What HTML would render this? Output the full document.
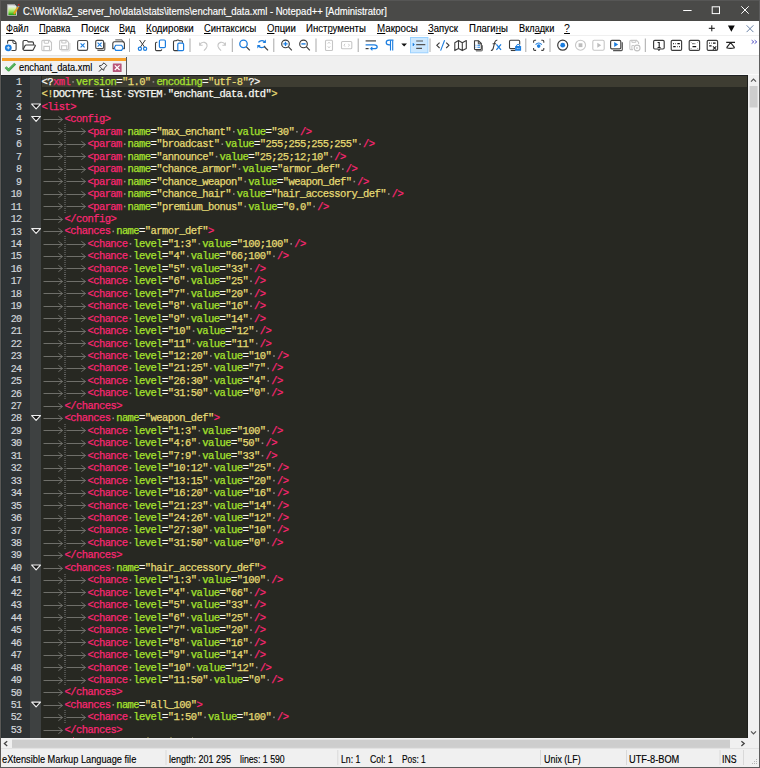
<!DOCTYPE html>
<html><head><meta charset="utf-8">
<style>
*{margin:0;padding:0;box-sizing:border-box}
html,body{width:760px;height:768px;overflow:hidden;background:#f0f0f0;font-family:"Liberation Sans",sans-serif}
.a{position:absolute}
.lbl{position:absolute;white-space:pre;transform-origin:0 0;-webkit-text-stroke:0.15px currentColor;font-size:10.5px;line-height:12px;color:#000}
u{text-decoration:underline;text-decoration-thickness:1px;text-underline-offset:0.5px;-webkit-text-stroke:0}
#title{left:0;top:0;width:760px;height:21px;background:#4a4a48}
#menu{left:1px;top:21px;width:758px;height:14px;background:#fff}
#tool{left:1px;top:35px;width:758px;height:20px;background:#fff;border-top:1px solid #f0f0f0}
#tabbar{left:1px;top:55px;width:758px;height:20px;background:#f0f0f0}
#editor{left:1px;top:75px;width:747px;height:663px;background:#272822;overflow:hidden}
#nummar{left:0;top:0;width:29px;height:663px;background:#2f3335;border-left:1px solid #293032}
#foldmar{left:29px;top:0;width:11px;height:663px;background:#3e4141}
.num{position:absolute;left:0;width:20.3px;text-align:right;font:10px "Liberation Mono",monospace;letter-spacing:-0.75px;-webkit-text-stroke:0.2px currentColor;line-height:12.46px;height:12.46px;color:#d2d6da}
.ln{position:absolute;left:40.5px;-webkit-text-stroke:0.25px currentColor;white-space:pre;font:10.5px "Liberation Mono",monospace;letter-spacing:-0.56px;line-height:12.46px;height:12.46px;color:#f8f8f2}
.ln .p{color:#f92672}.ln .g{color:#a6e22e}.ln .y{color:#e6db74}.ln .w{color:#f8f8f2}
.ln i{font-style:normal;color:#7a7a74}
.ln .t{display:inline-block;width:22.96px}
#curline{left:40.5px;top:0;width:707px;height:12.46px;background:#3e3d32}
#vscroll{left:748px;top:75px;width:11px;height:663px;background:#f0f0f0}
#hscroll{left:1px;top:738px;width:747px;height:10px;background:#f0f0f0}
#status{left:1px;top:748px;width:758px;height:19px;background:#f0f0f0;border-top:1px solid #e2e2e2}
#bl{left:0;top:0;width:1px;height:768px;background:#5a5856}
#br{left:759px;top:0;width:1px;height:768px;background:#5c5c5c}
#bb{left:0;top:767px;width:760px;height:1px;background:#5a5a5a}
</style></head><body>
<div id="title" class="a"></div>
<svg class="a" style="left:0;top:0" width="760" height="21"><defs><linearGradient id="gg" x1="0" y1="0" x2="0" y2="1"><stop offset="0" stop-color="#e8f0f8"/><stop offset="0.3" stop-color="#d8f0a0"/><stop offset="0.65" stop-color="#8ee04a"/><stop offset="1" stop-color="#1a9a10"/></linearGradient></defs><rect x="7.6" y="14.8" width="9.6" height="1.6" fill="#333" opacity="0.6"/><path d="M7.3 4.2H14.4L16.9 6.7V15.8H7.3Z" fill="#d9d9d9"/><path d="M7.3 4.2H14.4L15.2 5H7.3Z" fill="#9a9a9a"/><path d="M14.3 4.2V6.8H16.9Z" fill="#f0f0f0" stroke="#888" stroke-width="0.4"/><rect x="8.4" y="6.1" width="7.6" height="9" fill="url(#gg)"/><path d="M13.2 13.6L17.5 6.4L18.9 7.2L14.6 14.4Z" fill="#f0a818" stroke="#b87010" stroke-width="0.3"/><path d="M17.5 6.4L18.1 5.4L19.5 6.2L18.9 7.2Z" fill="#8aa0c0"/><circle cx="18.8" cy="4.8" r="0.9" fill="#d01818"/><path d="M683.2 10.5H691.6" stroke="#fff" stroke-width="1"/><rect x="712.2" y="6.8" width="7.3" height="6.8" fill="none" stroke="#fff" stroke-width="1"/><path d="M741.3 6.3L748.7 13.7M748.7 6.3L741.3 13.7" stroke="#fff" stroke-width="1"/></svg><div class="lbl" style="left:22.60px;top:4.56px;transform:scaleX(0.9065);color:#ffffff;font-size:10.5px">C:\Work\la2_server_ho\data\stats\items\enchant_data.xml - Notepad++ [Administrator]</div>
<div id="menu" class="a"></div>
<div class="lbl" style="left:6.00px;top:22.36px;transform:scaleX(0.8745);color:#000;font-size:10.5px"><u>Ф</u>айл</div>
<div class="lbl" style="left:39.40px;top:22.36px;transform:scaleX(0.8823);color:#000;font-size:10.5px"><u>П</u>равка</div>
<div class="lbl" style="left:81.40px;top:22.36px;transform:scaleX(0.9571);color:#000;font-size:10.5px">По<u>и</u>ск</div>
<div class="lbl" style="left:119.40px;top:22.36px;transform:scaleX(0.8564);color:#000;font-size:10.5px"><u>В</u>ид</div>
<div class="lbl" style="left:146.00px;top:22.36px;transform:scaleX(0.9260);color:#000;font-size:10.5px"><u>К</u>одировки</div>
<div class="lbl" style="left:203.90px;top:22.36px;transform:scaleX(0.8921);color:#000;font-size:10.5px"><u>С</u>интаксисы</div>
<div class="lbl" style="left:267.40px;top:22.36px;transform:scaleX(0.9118);color:#000;font-size:10.5px"><u>О</u>пции</div>
<div class="lbl" style="left:306.40px;top:22.36px;transform:scaleX(0.9135);color:#000;font-size:10.5px">Инст<u>р</u>ументы</div>
<div class="lbl" style="left:377.30px;top:22.36px;transform:scaleX(0.9328);color:#000;font-size:10.5px"><u>М</u>акросы</div>
<div class="lbl" style="left:428.40px;top:22.36px;transform:scaleX(0.9078);color:#000;font-size:10.5px"><u>З</u>апуск</div>
<div class="lbl" style="left:469.40px;top:22.36px;transform:scaleX(0.9121);color:#000;font-size:10.5px">Плаги<u>н</u>ы</div>
<div class="lbl" style="left:518.90px;top:22.36px;transform:scaleX(0.8761);color:#000;font-size:10.5px">Вкл<u>а</u>дки</div>
<div class="lbl" style="left:564.10px;top:22.36px;transform:scaleX(1.0000);color:#000;font-size:10.5px"><u>?</u></div><svg class="a" style="left:0;top:0" width="760" height="36"><path d="M708.8 28.3H714.8M711.8 25.3V31.3" stroke="#111" stroke-width="1"/><path d="M727.9 25.6H734.8L731.35 31.8Z" fill="#0a0a0a"/><path d="M746.6 25.3L753.4 32.1M753.4 25.3L746.6 32.1" stroke="#6a82a6" stroke-width="1"/></svg>
<div id="tool" class="a"></div>
<svg class="a" style="left:0;top:0" width="760" height="60"><path d="M8.9 40.4H13.2Q13.8 40.4 14.3 40.9L15.6 42.2Q16.1 42.7 16.1 43.3V49.3Q16.1 50.5 14.9 50.5H8.9Q7.6 50.5 7.6 49.3V41.7Q7.6 40.4 8.9 40.4Z" fill="#fff" stroke="#3c3c3c" stroke-width="1.1"/><path d="M12.9 40.5V42.3Q12.9 43.5 14.1 43.5H16" fill="none" stroke="#3c3c3c" stroke-width="1"/><circle cx="8.3" cy="47.8" r="4.3" fill="#fff"/><circle cx="8.3" cy="47.8" r="3.4" fill="#1b7ddf"/><path d="M8.3 46.2V49.4M6.7 47.8H9.9" stroke="#d8e8f8" stroke-width="1"/><path d="M23 49.4V41.7Q23 40.5 24.2 40.5H26.6Q27.2 40.5 27.6 41L28.2 41.8H32.3Q33.5 41.8 33.5 43V44.8" fill="none" stroke="#3c3c3c" stroke-width="1.15" stroke-linejoin="round"/><path d="M23.4 50.3H32.2Q33 50.3 33.4 49.6L35.2 46Q35.6 45 34.6 45H26.2Q25.4 45 25 45.8L23 49.8" fill="none" stroke="#3c3c3c" stroke-width="1.15" stroke-linejoin="round"/><path d="M41.8 41.5Q41.8 40.4 42.9 40.4H49.3L51.5 42.6V49.6Q51.5 50.6 50.5 50.6H42.9Q41.8 50.6 41.8 49.6Z" fill="none" stroke="#c6c6c6" stroke-width="1.1"/><path d="M44.2 40.6V42.6Q44.2 43.2 44.8 43.2H48.1Q48.6 43.2 48.6 42.6V40.6M43.9 50.5V46.4H49.5V50.5" fill="none" stroke="#c6c6c6" stroke-width="1.1"/><path d="M59.6 41.5Q59.6 40.4 60.7 40.4H66.6L68.6 42.4V48.6Q68.6 49.6 67.6 49.6H60.7Q59.6 49.6 59.6 48.6Z" fill="none" stroke="#c6c6c6" stroke-width="1.1"/><path d="M61.8 40.6V42.4Q61.8 43 62.4 43H65.5Q66 43 66 42.4V40.6M61.6 49.5V45.8H66.8V49.5" fill="none" stroke="#c6c6c6" stroke-width="1.1"/><path d="M69.9 43V49.8Q69.9 50.9 68.8 50.9H61.3" fill="none" stroke="#d4d4d4" stroke-width="1"/><rect x="77.6" y="40.5" width="10" height="9.8" rx="1.6" fill="#fff" stroke="#4a4a4a" stroke-width="1.15"/><path d="M80.6 43.4L84.6 47.4M84.6 43.4L80.6 47.4" stroke="#1b7ddf" stroke-width="1.1"/><path d="M104.8 42.4V49.3Q104.8 50.4 103.7 50.4H97.4" fill="none" stroke="#5a5a5a" stroke-width="1.2"/><rect x="95.7" y="40.4" width="7.9" height="8.2" rx="1.4" fill="#fff" stroke="#4a4a4a" stroke-width="1.15"/><path d="M97.6 42.6L101.6 46.6M101.6 42.6L97.6 46.6" stroke="#1b7ddf" stroke-width="1.1"/><path d="M115.3 39.8H121.6L123.8 42.4" fill="none" stroke="#777" stroke-width="1.3"/><path d="M114 48.6H112.8V43.4Q112.8 41.8 114.6 41.8H122.6Q124.4 41.8 124.4 43.4V48.6H123.2" fill="none" stroke="#3c3c3c" stroke-width="1.1" stroke-linejoin="round"/><path d="M115.7 45.3H121.6L123.1 47.9L121.6 50.4H115.7L114.2 47.9Z" fill="#fff" stroke="#1b7ddf" stroke-width="1.1" stroke-linejoin="round"/><rect x="129.0" y="38.5" width="1" height="13.5" fill="#a9a9a9"/><path d="M139.6 40L144.6 47.2M145.3 40L140.3 47.2" stroke="#3c3c3c" stroke-width="1"/><circle cx="139.9" cy="48.7" r="1.6" fill="none" stroke="#1b7ddf" stroke-width="1.2"/><circle cx="145.1" cy="48.7" r="1.6" fill="none" stroke="#1b7ddf" stroke-width="1.2"/><path d="M157.3 42.3H156.6Q155.5 42.3 155.5 43.4V49.5Q155.5 50.6 156.6 50.6H160.5Q161.6 50.6 161.8 49.3" fill="none" stroke="#3c3c3c" stroke-width="1.1"/><rect x="159.4" y="40" width="6" height="7.7" rx="1.2" fill="#fff" stroke="#1b7ddf" stroke-width="1.2"/><path d="M178.5 50.6H174.6Q173.5 50.6 173.5 49.5V41.8Q173.5 40.8 174.6 40.8H176Q177.8 39.3 179.6 40.8H181.4Q182.5 40.8 182.5 42V42.8" fill="none" stroke="#3c3c3c" stroke-width="1.1"/><rect x="177.8" y="43.2" width="5.8" height="7.5" rx="1.2" fill="#fff" stroke="#1b7ddf" stroke-width="1.2"/><rect x="189.5" y="38.5" width="1" height="13.5" fill="#a9a9a9"/><path d="M199.6 42.4V45.3H202.6M199.8 45Q201.3 41.7 204.4 42.4Q207.4 43.2 207 46.4Q206.6 48.3 203.9 50.6" fill="none" stroke="#c6c6c6" stroke-width="1.1"/><path d="M225.4 42.4V45.3H222.4M225.2 45Q223.7 41.7 220.6 42.4Q217.6 43.2 218 46.4Q218.4 48.3 221.1 50.6" fill="none" stroke="#c6c6c6" stroke-width="1.1"/><rect x="231.8" y="38.5" width="1" height="13.5" fill="#a9a9a9"/><circle cx="243.5" cy="43.9" r="3.7" fill="none" stroke="#1b7ddf" stroke-width="1.3"/><path d="M246.4 46.8L249.8 50.4" stroke="#3c3c3c" stroke-width="1.2"/><path d="M258.4 42.4Q260 40.4 262.2 40.6Q264 40.8 265 42.2" fill="none" stroke="#1b7ddf" stroke-width="1.3"/><path d="M265.9 39.6V43H262.6Z" fill="#1b7ddf"/><path d="M265 45.8Q263.8 47.6 261.6 47.6Q259.6 47.4 258.6 45.9" fill="none" stroke="#1b7ddf" stroke-width="1.3"/><path d="M257.3 48.4V45.1H260.6Z" fill="#1b7ddf"/><path d="M264.2 46.5L268 50.4" stroke="#3c3c3c" stroke-width="1.2"/><rect x="273.3" y="38.5" width="1" height="13.5" fill="#a9a9a9"/><circle cx="285.5" cy="43.9" r="3.8" fill="#fff" stroke="#3c3c3c" stroke-width="1.15"/><path d="M285.5 41.8V46M283.4 43.9H287.6" stroke="#1b7ddf" stroke-width="1.3"/><path d="M288.3 46.7L291.8 50.4" stroke="#3c3c3c" stroke-width="1.2"/><circle cx="303.5" cy="43.9" r="3.8" fill="#fff" stroke="#3c3c3c" stroke-width="1.15"/><path d="M301.4 43.9H305.6" stroke="#1b7ddf" stroke-width="1.4"/><path d="M306.3 46.7L309.8 50.4" stroke="#3c3c3c" stroke-width="1.2"/><rect x="315.5" y="38.5" width="1" height="13.5" fill="#a9a9a9"/><rect x="325.5" y="40.3" width="7" height="10.2" rx="1" fill="none" stroke="#c6c6c6" stroke-width="1.1"/><path d="M327.6 43.4L329 42.4L330.4 43.4M327.6 46.6L329 47.6L330.4 46.6" fill="none" stroke="#c6c6c6" stroke-width="0.9"/><rect x="341.5" y="41.5" width="10.3" height="7.3" rx="1" fill="none" stroke="#c6c6c6" stroke-width="1.1"/><path d="M345 43.8L344 45.2L345 46.6M348.4 43.8L349.4 45.2L348.4 46.6" fill="none" stroke="#c6c6c6" stroke-width="0.9"/><rect x="357.7" y="38.5" width="1" height="13.5" fill="#a9a9a9"/><path d="M365.6 40.9H376" stroke="#555" stroke-width="1.3"/><path d="M365.6 44.8H374.2Q377.2 44.8 377.2 46.9Q377.2 48.6 374.4 48.6H371.4" fill="none" stroke="#1b7ddf" stroke-width="1.2"/><path d="M372 46.9L370.3 48.6L372 50.3Z" fill="#1b7ddf" stroke="#1b7ddf" stroke-width="0.8"/><path d="M365.6 48.6H368.6" stroke="#3c3c3c" stroke-width="1.2"/><path d="M390.2 44.9H389.1Q386.2 44.9 386.2 42.5Q386.2 40.2 389.1 40.2H393.4" fill="none" stroke="#1b7ddf" stroke-width="1.2"/><path d="M390.5 40.3V50.6M392.7 40.3V50.6" stroke="#1b7ddf" stroke-width="1.1"/><path d="M401.3 43.6H407L404.15 46.6Z" fill="#111"/><rect x="410.5" y="37.5" width="17.4" height="15.3" fill="#cce8ff" stroke="#99d1ff" stroke-width="1"/><path d="M416.2 41H423M416.2 44.6H425.3M416.2 48.3H422" stroke="#555" stroke-width="1.2"/><path d="M413 43.2L414.4 44.6L413 46Z" fill="#1b7ddf" stroke="#1b7ddf" stroke-width="0.6"/><rect x="429.5" y="38.5" width="1" height="13.5" fill="#a9a9a9"/><path d="M439.6 42.6L436.8 45.3L439.6 48M446.2 42.6L449 45.3L446.2 48" fill="none" stroke="#3c3c3c" stroke-width="1.1"/><path d="M444.6 40.2L440.6 50.6" stroke="#1b7ddf" stroke-width="1.1"/><path d="M454.8 42.7L458.5 40.6L462.3 42.7L466.3 40.6V48.6L462.3 50.6L458.5 48.6L454.8 50.6Z M458.5 40.6V48.6M462.3 42.7V50.6" fill="none" stroke="#3c3c3c" stroke-width="1.1" stroke-linejoin="round"/><path d="M482.4 45.3V49.5Q482.4 50.8 481.2 50.8H476" fill="none" stroke="#777" stroke-width="1.2"/><path d="M474.5 40.8H478.6L481.3 43.5V48.8Q481.3 49.6 480.5 49.6H475.3Q474.5 49.6 474.5 48.8Z" fill="#fff" stroke="#3c3c3c" stroke-width="1.1" stroke-linejoin="round"/><path d="M478.3 40.8V43.8H481.3" fill="none" stroke="#3c3c3c" stroke-width="1"/><path d="M475.6 45.3H476.3M475.6 47.3H476.3M477.4 45.3H480M477.4 47.3H480" stroke="#1b7ddf" stroke-width="1.1"/><path d="M497.3 40.3Q495.4 39.8 494.6 42.6L493.1 48.8Q492.4 50.8 490.9 50.3M492.6 43.7H496.1" fill="none" stroke="#3c3c3c" stroke-width="1.1"/><path d="M496.4 44.3L501 49.8M501 44.3L496.4 49.8" stroke="#1b7ddf" stroke-width="1.3"/><path d="M515 48.6H510.6Q509.5 48.6 509.5 47.5V41.4Q509.5 40.3 510.6 40.3H518.6Q519.7 40.3 519.7 41.4V44.6" fill="none" stroke="#3c3c3c" stroke-width="1.1"/><path d="M510.8 50.5H515.6" stroke="#3c3c3c" stroke-width="1.1"/><rect x="515.1" y="46" width="6" height="4.8" rx="0.6" fill="#1b7ddf"/><path d="M516.6 46.2V45.2Q518.1 43.3 519.6 45.2V46.2" fill="none" stroke="#1b7ddf" stroke-width="1"/><path d="M516.8 48.4H517.6M518.6 48.4H519.4" stroke="#fff" stroke-width="1"/><rect x="525.3" y="38.5" width="1" height="13.5" fill="#a9a9a9"/><path d="M533.6 42.8V41.4Q533.6 40.3 534.7 40.3H536.1M541.3 40.3H542.7Q543.8 40.3 543.8 41.4V42.8M543.8 47.9V49.3Q543.8 50.4 542.7 50.4H541.3M536.1 50.4H534.7Q533.6 50.4 533.6 49.3V47.9" fill="none" stroke="#3c3c3c" stroke-width="1.1"/><path d="M535.6 44.6Q538.7 41.4 541.8 44.6" fill="none" stroke="#1b7ddf" stroke-width="1.1"/><circle cx="538.7" cy="46.1" r="1.8" fill="#1b7ddf"/><rect x="549.5" y="38.5" width="1" height="13.5" fill="#a9a9a9"/><circle cx="562.7" cy="45.2" r="5" fill="#fff" stroke="#3c3c3c" stroke-width="1.2"/><circle cx="562.7" cy="45.2" r="2.4" fill="#1b7ddf"/><circle cx="580.5" cy="45.2" r="5" fill="none" stroke="#c6c6c6" stroke-width="1.1"/><rect x="578.6" y="43.3" width="3.8" height="3.8" fill="#bcbcbc"/><rect x="592.8" y="40.3" width="11.4" height="9.9" rx="1.4" fill="none" stroke="#c6c6c6" stroke-width="1.1"/><path d="M597.3 42.8V47.8L601.2 45.3Z" fill="#bdbdbd"/><path d="M622.3 42.2V49.6Q622.3 50.6 621.3 50.6H613.1" fill="none" stroke="#555" stroke-width="1.2"/><rect x="610.6" y="40.4" width="10.2" height="8.5" rx="1.3" fill="#fff" stroke="#444" stroke-width="1.15"/><path d="M614.2 42V47L618.2 44.5Z" fill="#1b7ddf"/><path d="M633 49.6H630.7Q629.8 49.6 629.8 48.6V41.4Q629.8 40.4 630.8 40.4H636.6L638.6 42.4V44" fill="none" stroke="#c6c6c6" stroke-width="1.1"/><path d="M631.9 40.6V42.3H635.8V40.6M631.9 49.5V45.6H634" fill="none" stroke="#c6c6c6" stroke-width="1"/><circle cx="637.1" cy="48" r="2.9" fill="#fff" stroke="#c0c0c0" stroke-width="1.1"/><path d="M636.4 46.7V49.3L638.3 48Z" fill="#c0c0c0"/><rect x="644.8" y="38.5" width="1" height="13.5" fill="#a9a9a9"/><path d="M653.6 41.6Q653.6 40.4 654.8 40.4H663Q664.2 40.4 664.2 41.6V47.8Q664.2 49 663 49H660L658.9 50.4L657.8 49H654.8Q653.6 49 653.6 47.8Z" fill="#fff" stroke="#3c3c3c" stroke-width="1.15" stroke-linejoin="round"/><path d="M657.6 42.5H659.2V47.8M657.6 47.6H660.6" fill="none" stroke="#222" stroke-width="1.1"/><rect x="671.2" y="40.4" width="10.4" height="10" rx="1.2" fill="#fff" stroke="#3c3c3c" stroke-width="1.15"/><path d="M673.2 43.7H674M675.2 43.7H675.7M677.4 43.7H679.8M673.2 46.7H675.7M677.4 46.7H677.9M679 46.7H679.8" stroke="#111" stroke-width="1.3"/><rect x="689.2" y="40.4" width="10.4" height="10" rx="1.2" fill="#fff" stroke="#3c3c3c" stroke-width="1.15"/><path d="M692.5 43.7H693.5M694.6 43.7H695.2M692.5 46.7H696.2" stroke="#111" stroke-width="1.3"/><path d="M690.6 41.8L691.4 42.6M698.2 41.8L697.4 42.6M690.6 49L691.4 48.2M698.2 49L697.4 48.2" stroke="#666" stroke-width="0.8"/><rect x="707.2" y="40.4" width="10.4" height="10" rx="1.2" fill="#fff" stroke="#3c3c3c" stroke-width="1.15"/><path d="M709.2 43.2H710M711 43.2H711.5M713 43.2H715.6M709.2 45.8H711.6" stroke="#111" stroke-width="1.2"/><path d="M712.9 46.4L716.3 49.6M716.3 46.4L712.9 49.6" stroke="#222" stroke-width="1.1"/><path d="M726.2 42.4H735M730.6 42.6L726.6 47.7M730.6 42.6L734.6 47.7M726.4 47.8Q730.6 49 734.8 47.8" fill="none" stroke="#222" stroke-width="1.1"/><path d="M751.6 40.2L753.8 41.9L751.6 43.6M754.6 40.2L756.8 41.9L754.6 43.6" fill="none" stroke="#5b5bc8" stroke-width="1"/></svg>
<div id="tabbar" class="a"></div><div class="a" style="left:1px;top:55px;width:758px;height:1px;background:#e4e4e4"></div><div class="a" style="left:1px;top:74px;width:758px;height:1px;background:#fafafa"></div>
<div class="a" style="left:1px;top:57px;width:126px;height:18px;background:#f1f1f1;border-right:1px solid #5a5a5a;border-left:1px solid #fff"></div><div class="a" style="left:2px;top:58px;width:124px;height:3px;background:#f7a02a"></div><svg class="a" style="left:0;top:0" width="760" height="76"><path d="M5.6 67.2L8.5 70.2L15.2 63.6" fill="none" stroke="#42a44c" stroke-width="2.6" stroke-linejoin="round"/><path d="M5.9 67.2L8.5 69.8L14.9 63.6" fill="none" stroke="#6cc06f" stroke-width="1"/><path d="M99 71.6L101.6 69M100.6 67.4L103.6 70.4L104.2 68.2L106.8 65.6L104 62.8L101.4 65.4L99.2 66Z" fill="none" stroke="#333" stroke-width="1"/><rect x="112.8" y="63.4" width="8.8" height="8.6" fill="#b8567a" rx="0.5"/><path d="M114.8 65.4L119.6 70M119.6 65.4L114.8 70" stroke="#fff" stroke-width="1.3"/></svg><div class="lbl" style="left:18.80px;top:60.96px;transform:scaleX(0.8830);color:#000;font-size:10.5px">enchant_data.xml</div>
<div id="editor" class="a">
<div id="nummar" class="a"></div>
<div id="foldmar" class="a"></div>
<div id="curline" class="a"></div>
<div class="num" style="top:2.00px">1</div>
<div class="num" style="top:14.46px">2</div>
<div class="num" style="top:26.92px">3</div>
<div class="num" style="top:39.38px">4</div>
<div class="num" style="top:51.84px">5</div>
<div class="num" style="top:64.30px">6</div>
<div class="num" style="top:76.76px">7</div>
<div class="num" style="top:89.22px">8</div>
<div class="num" style="top:101.68px">9</div>
<div class="num" style="top:114.14px">10</div>
<div class="num" style="top:126.60px">11</div>
<div class="num" style="top:139.06px">12</div>
<div class="num" style="top:151.52px">13</div>
<div class="num" style="top:163.98px">14</div>
<div class="num" style="top:176.44px">15</div>
<div class="num" style="top:188.90px">16</div>
<div class="num" style="top:201.36px">17</div>
<div class="num" style="top:213.82px">18</div>
<div class="num" style="top:226.28px">19</div>
<div class="num" style="top:238.74px">20</div>
<div class="num" style="top:251.20px">21</div>
<div class="num" style="top:263.66px">22</div>
<div class="num" style="top:276.12px">23</div>
<div class="num" style="top:288.58px">24</div>
<div class="num" style="top:301.04px">25</div>
<div class="num" style="top:313.50px">26</div>
<div class="num" style="top:325.96px">27</div>
<div class="num" style="top:338.42px">28</div>
<div class="num" style="top:350.88px">29</div>
<div class="num" style="top:363.34px">30</div>
<div class="num" style="top:375.80px">31</div>
<div class="num" style="top:388.26px">32</div>
<div class="num" style="top:400.72px">33</div>
<div class="num" style="top:413.18px">34</div>
<div class="num" style="top:425.64px">35</div>
<div class="num" style="top:438.10px">36</div>
<div class="num" style="top:450.56px">37</div>
<div class="num" style="top:463.02px">38</div>
<div class="num" style="top:475.48px">39</div>
<div class="num" style="top:487.94px">40</div>
<div class="num" style="top:500.40px">41</div>
<div class="num" style="top:512.86px">42</div>
<div class="num" style="top:525.32px">43</div>
<div class="num" style="top:537.78px">44</div>
<div class="num" style="top:550.24px">45</div>
<div class="num" style="top:562.70px">46</div>
<div class="num" style="top:575.16px">47</div>
<div class="num" style="top:587.62px">48</div>
<div class="num" style="top:600.08px">49</div>
<div class="num" style="top:612.54px">50</div>
<div class="num" style="top:625.00px">51</div>
<div class="num" style="top:637.46px">52</div>
<div class="num" style="top:649.92px">53</div>
<svg class="a" style="left:-1px;top:-75px" width="760" height="768">
<g fill="#7a7a7a"><rect x="64.5" y="124" width="1" height="1"/><rect x="64.5" y="126" width="1" height="1"/><rect x="64.5" y="128" width="1" height="1"/><rect x="64.5" y="130" width="1" height="1"/><rect x="64.5" y="132" width="1" height="1"/><rect x="64.5" y="134" width="1" height="1"/><rect x="64.5" y="136" width="1" height="1"/><rect x="64.5" y="138" width="1" height="1"/><rect x="64.5" y="140" width="1" height="1"/><rect x="64.5" y="142" width="1" height="1"/><rect x="64.5" y="144" width="1" height="1"/><rect x="64.5" y="146" width="1" height="1"/><rect x="64.5" y="148" width="1" height="1"/><rect x="64.5" y="150" width="1" height="1"/><rect x="64.5" y="152" width="1" height="1"/><rect x="64.5" y="154" width="1" height="1"/><rect x="64.5" y="156" width="1" height="1"/><rect x="64.5" y="158" width="1" height="1"/><rect x="64.5" y="160" width="1" height="1"/><rect x="64.5" y="162" width="1" height="1"/><rect x="64.5" y="162" width="1" height="1"/><rect x="64.5" y="164" width="1" height="1"/><rect x="64.5" y="166" width="1" height="1"/><rect x="64.5" y="168" width="1" height="1"/><rect x="64.5" y="170" width="1" height="1"/><rect x="64.5" y="172" width="1" height="1"/><rect x="64.5" y="174" width="1" height="1"/><rect x="64.5" y="174" width="1" height="1"/><rect x="64.5" y="176" width="1" height="1"/><rect x="64.5" y="178" width="1" height="1"/><rect x="64.5" y="180" width="1" height="1"/><rect x="64.5" y="182" width="1" height="1"/><rect x="64.5" y="184" width="1" height="1"/><rect x="64.5" y="186" width="1" height="1"/><rect x="64.5" y="188" width="1" height="1"/><rect x="64.5" y="190" width="1" height="1"/><rect x="64.5" y="192" width="1" height="1"/><rect x="64.5" y="194" width="1" height="1"/><rect x="64.5" y="196" width="1" height="1"/><rect x="64.5" y="198" width="1" height="1"/><rect x="64.5" y="200" width="1" height="1"/><rect x="64.5" y="202" width="1" height="1"/><rect x="64.5" y="204" width="1" height="1"/><rect x="64.5" y="206" width="1" height="1"/><rect x="64.5" y="208" width="1" height="1"/><rect x="64.5" y="210" width="1" height="1"/><rect x="64.5" y="212" width="1" height="1"/><rect x="64.5" y="236" width="1" height="1"/><rect x="64.5" y="238" width="1" height="1"/><rect x="64.5" y="240" width="1" height="1"/><rect x="64.5" y="242" width="1" height="1"/><rect x="64.5" y="244" width="1" height="1"/><rect x="64.5" y="246" width="1" height="1"/><rect x="64.5" y="248" width="1" height="1"/><rect x="64.5" y="250" width="1" height="1"/><rect x="64.5" y="252" width="1" height="1"/><rect x="64.5" y="254" width="1" height="1"/><rect x="64.5" y="256" width="1" height="1"/><rect x="64.5" y="258" width="1" height="1"/><rect x="64.5" y="260" width="1" height="1"/><rect x="64.5" y="262" width="1" height="1"/><rect x="64.5" y="264" width="1" height="1"/><rect x="64.5" y="266" width="1" height="1"/><rect x="64.5" y="268" width="1" height="1"/><rect x="64.5" y="270" width="1" height="1"/><rect x="64.5" y="272" width="1" height="1"/><rect x="64.5" y="274" width="1" height="1"/><rect x="64.5" y="274" width="1" height="1"/><rect x="64.5" y="276" width="1" height="1"/><rect x="64.5" y="278" width="1" height="1"/><rect x="64.5" y="280" width="1" height="1"/><rect x="64.5" y="282" width="1" height="1"/><rect x="64.5" y="284" width="1" height="1"/><rect x="64.5" y="286" width="1" height="1"/><rect x="64.5" y="286" width="1" height="1"/><rect x="64.5" y="288" width="1" height="1"/><rect x="64.5" y="290" width="1" height="1"/><rect x="64.5" y="292" width="1" height="1"/><rect x="64.5" y="294" width="1" height="1"/><rect x="64.5" y="296" width="1" height="1"/><rect x="64.5" y="298" width="1" height="1"/><rect x="64.5" y="300" width="1" height="1"/><rect x="64.5" y="302" width="1" height="1"/><rect x="64.5" y="304" width="1" height="1"/><rect x="64.5" y="306" width="1" height="1"/><rect x="64.5" y="308" width="1" height="1"/><rect x="64.5" y="310" width="1" height="1"/><rect x="64.5" y="312" width="1" height="1"/><rect x="64.5" y="314" width="1" height="1"/><rect x="64.5" y="316" width="1" height="1"/><rect x="64.5" y="318" width="1" height="1"/><rect x="64.5" y="320" width="1" height="1"/><rect x="64.5" y="322" width="1" height="1"/><rect x="64.5" y="324" width="1" height="1"/><rect x="64.5" y="324" width="1" height="1"/><rect x="64.5" y="326" width="1" height="1"/><rect x="64.5" y="328" width="1" height="1"/><rect x="64.5" y="330" width="1" height="1"/><rect x="64.5" y="332" width="1" height="1"/><rect x="64.5" y="334" width="1" height="1"/><rect x="64.5" y="336" width="1" height="1"/><rect x="64.5" y="336" width="1" height="1"/><rect x="64.5" y="338" width="1" height="1"/><rect x="64.5" y="340" width="1" height="1"/><rect x="64.5" y="342" width="1" height="1"/><rect x="64.5" y="344" width="1" height="1"/><rect x="64.5" y="346" width="1" height="1"/><rect x="64.5" y="348" width="1" height="1"/><rect x="64.5" y="350" width="1" height="1"/><rect x="64.5" y="352" width="1" height="1"/><rect x="64.5" y="354" width="1" height="1"/><rect x="64.5" y="356" width="1" height="1"/><rect x="64.5" y="358" width="1" height="1"/><rect x="64.5" y="360" width="1" height="1"/><rect x="64.5" y="362" width="1" height="1"/><rect x="64.5" y="364" width="1" height="1"/><rect x="64.5" y="366" width="1" height="1"/><rect x="64.5" y="368" width="1" height="1"/><rect x="64.5" y="370" width="1" height="1"/><rect x="64.5" y="372" width="1" height="1"/><rect x="64.5" y="374" width="1" height="1"/><rect x="64.5" y="374" width="1" height="1"/><rect x="64.5" y="376" width="1" height="1"/><rect x="64.5" y="378" width="1" height="1"/><rect x="64.5" y="380" width="1" height="1"/><rect x="64.5" y="382" width="1" height="1"/><rect x="64.5" y="384" width="1" height="1"/><rect x="64.5" y="386" width="1" height="1"/><rect x="64.5" y="386" width="1" height="1"/><rect x="64.5" y="388" width="1" height="1"/><rect x="64.5" y="390" width="1" height="1"/><rect x="64.5" y="392" width="1" height="1"/><rect x="64.5" y="394" width="1" height="1"/><rect x="64.5" y="396" width="1" height="1"/><rect x="64.5" y="398" width="1" height="1"/><rect x="64.5" y="424" width="1" height="1"/><rect x="64.5" y="426" width="1" height="1"/><rect x="64.5" y="428" width="1" height="1"/><rect x="64.5" y="430" width="1" height="1"/><rect x="64.5" y="432" width="1" height="1"/><rect x="64.5" y="434" width="1" height="1"/><rect x="64.5" y="436" width="1" height="1"/><rect x="64.5" y="436" width="1" height="1"/><rect x="64.5" y="438" width="1" height="1"/><rect x="64.5" y="440" width="1" height="1"/><rect x="64.5" y="442" width="1" height="1"/><rect x="64.5" y="444" width="1" height="1"/><rect x="64.5" y="446" width="1" height="1"/><rect x="64.5" y="448" width="1" height="1"/><rect x="64.5" y="448" width="1" height="1"/><rect x="64.5" y="450" width="1" height="1"/><rect x="64.5" y="452" width="1" height="1"/><rect x="64.5" y="454" width="1" height="1"/><rect x="64.5" y="456" width="1" height="1"/><rect x="64.5" y="458" width="1" height="1"/><rect x="64.5" y="460" width="1" height="1"/><rect x="64.5" y="462" width="1" height="1"/><rect x="64.5" y="464" width="1" height="1"/><rect x="64.5" y="466" width="1" height="1"/><rect x="64.5" y="468" width="1" height="1"/><rect x="64.5" y="470" width="1" height="1"/><rect x="64.5" y="472" width="1" height="1"/><rect x="64.5" y="474" width="1" height="1"/><rect x="64.5" y="476" width="1" height="1"/><rect x="64.5" y="478" width="1" height="1"/><rect x="64.5" y="480" width="1" height="1"/><rect x="64.5" y="482" width="1" height="1"/><rect x="64.5" y="484" width="1" height="1"/><rect x="64.5" y="486" width="1" height="1"/><rect x="64.5" y="486" width="1" height="1"/><rect x="64.5" y="488" width="1" height="1"/><rect x="64.5" y="490" width="1" height="1"/><rect x="64.5" y="492" width="1" height="1"/><rect x="64.5" y="494" width="1" height="1"/><rect x="64.5" y="496" width="1" height="1"/><rect x="64.5" y="498" width="1" height="1"/><rect x="64.5" y="498" width="1" height="1"/><rect x="64.5" y="500" width="1" height="1"/><rect x="64.5" y="502" width="1" height="1"/><rect x="64.5" y="504" width="1" height="1"/><rect x="64.5" y="506" width="1" height="1"/><rect x="64.5" y="508" width="1" height="1"/><rect x="64.5" y="510" width="1" height="1"/><rect x="64.5" y="512" width="1" height="1"/><rect x="64.5" y="514" width="1" height="1"/><rect x="64.5" y="516" width="1" height="1"/><rect x="64.5" y="518" width="1" height="1"/><rect x="64.5" y="520" width="1" height="1"/><rect x="64.5" y="522" width="1" height="1"/><rect x="64.5" y="524" width="1" height="1"/><rect x="64.5" y="526" width="1" height="1"/><rect x="64.5" y="528" width="1" height="1"/><rect x="64.5" y="530" width="1" height="1"/><rect x="64.5" y="532" width="1" height="1"/><rect x="64.5" y="534" width="1" height="1"/><rect x="64.5" y="536" width="1" height="1"/><rect x="64.5" y="536" width="1" height="1"/><rect x="64.5" y="538" width="1" height="1"/><rect x="64.5" y="540" width="1" height="1"/><rect x="64.5" y="542" width="1" height="1"/><rect x="64.5" y="544" width="1" height="1"/><rect x="64.5" y="546" width="1" height="1"/><rect x="64.5" y="548" width="1" height="1"/><rect x="64.5" y="574" width="1" height="1"/><rect x="64.5" y="576" width="1" height="1"/><rect x="64.5" y="578" width="1" height="1"/><rect x="64.5" y="580" width="1" height="1"/><rect x="64.5" y="582" width="1" height="1"/><rect x="64.5" y="584" width="1" height="1"/><rect x="64.5" y="586" width="1" height="1"/><rect x="64.5" y="588" width="1" height="1"/><rect x="64.5" y="590" width="1" height="1"/><rect x="64.5" y="592" width="1" height="1"/><rect x="64.5" y="594" width="1" height="1"/><rect x="64.5" y="596" width="1" height="1"/><rect x="64.5" y="598" width="1" height="1"/><rect x="64.5" y="598" width="1" height="1"/><rect x="64.5" y="600" width="1" height="1"/><rect x="64.5" y="602" width="1" height="1"/><rect x="64.5" y="604" width="1" height="1"/><rect x="64.5" y="606" width="1" height="1"/><rect x="64.5" y="608" width="1" height="1"/><rect x="64.5" y="610" width="1" height="1"/><rect x="64.5" y="610" width="1" height="1"/><rect x="64.5" y="612" width="1" height="1"/><rect x="64.5" y="614" width="1" height="1"/><rect x="64.5" y="616" width="1" height="1"/><rect x="64.5" y="618" width="1" height="1"/><rect x="64.5" y="620" width="1" height="1"/><rect x="64.5" y="622" width="1" height="1"/><rect x="64.5" y="624" width="1" height="1"/><rect x="64.5" y="626" width="1" height="1"/><rect x="64.5" y="628" width="1" height="1"/><rect x="64.5" y="630" width="1" height="1"/><rect x="64.5" y="632" width="1" height="1"/><rect x="64.5" y="634" width="1" height="1"/><rect x="64.5" y="636" width="1" height="1"/><rect x="64.5" y="638" width="1" height="1"/><rect x="64.5" y="640" width="1" height="1"/><rect x="64.5" y="642" width="1" height="1"/><rect x="64.5" y="644" width="1" height="1"/><rect x="64.5" y="646" width="1" height="1"/><rect x="64.5" y="648" width="1" height="1"/><rect x="64.5" y="648" width="1" height="1"/><rect x="64.5" y="650" width="1" height="1"/><rect x="64.5" y="652" width="1" height="1"/><rect x="64.5" y="654" width="1" height="1"/><rect x="64.5" y="656" width="1" height="1"/><rect x="64.5" y="658" width="1" height="1"/><rect x="64.5" y="660" width="1" height="1"/><rect x="64.5" y="660" width="1" height="1"/><rect x="64.5" y="662" width="1" height="1"/><rect x="64.5" y="664" width="1" height="1"/><rect x="64.5" y="666" width="1" height="1"/><rect x="64.5" y="668" width="1" height="1"/><rect x="64.5" y="670" width="1" height="1"/><rect x="64.5" y="672" width="1" height="1"/><rect x="64.5" y="674" width="1" height="1"/><rect x="64.5" y="676" width="1" height="1"/><rect x="64.5" y="678" width="1" height="1"/><rect x="64.5" y="680" width="1" height="1"/><rect x="64.5" y="682" width="1" height="1"/><rect x="64.5" y="684" width="1" height="1"/><rect x="64.5" y="710" width="1" height="1"/><rect x="64.5" y="712" width="1" height="1"/><rect x="64.5" y="714" width="1" height="1"/><rect x="64.5" y="716" width="1" height="1"/><rect x="64.5" y="718" width="1" height="1"/><rect x="64.5" y="720" width="1" height="1"/><rect x="64.5" y="722" width="1" height="1"/></g><g fill="#8c8c86"><rect x="72.27" y="81.10" width="1.6" height="1.6"/><rect x="152.63" y="81.10" width="1.6" height="1.6"/><rect x="95.23" y="93.56" width="1.6" height="1.6"/><rect x="123.93" y="93.56" width="1.6" height="1.6"/><rect x="164.11" y="93.56" width="1.6" height="1.6"/><rect x="123.93" y="130.94" width="1.6" height="1.6"/><rect x="232.99" y="130.94" width="1.6" height="1.6"/><rect x="296.13" y="130.94" width="1.6" height="1.6"/><rect x="123.93" y="143.40" width="1.6" height="1.6"/><rect x="221.51" y="143.40" width="1.6" height="1.6"/><rect x="359.27" y="143.40" width="1.6" height="1.6"/><rect x="123.93" y="155.86" width="1.6" height="1.6"/><rect x="215.77" y="155.86" width="1.6" height="1.6"/><rect x="330.57" y="155.86" width="1.6" height="1.6"/><rect x="123.93" y="168.32" width="1.6" height="1.6"/><rect x="238.73" y="168.32" width="1.6" height="1.6"/><rect x="342.05" y="168.32" width="1.6" height="1.6"/><rect x="123.93" y="180.78" width="1.6" height="1.6"/><rect x="244.47" y="180.78" width="1.6" height="1.6"/><rect x="353.53" y="180.78" width="1.6" height="1.6"/><rect x="123.93" y="193.24" width="1.6" height="1.6"/><rect x="232.99" y="193.24" width="1.6" height="1.6"/><rect x="387.97" y="193.24" width="1.6" height="1.6"/><rect x="123.93" y="205.70" width="1.6" height="1.6"/><rect x="244.47" y="205.70" width="1.6" height="1.6"/><rect x="313.35" y="205.70" width="1.6" height="1.6"/><rect x="112.45" y="230.62" width="1.6" height="1.6"/><rect x="129.67" y="243.08" width="1.6" height="1.6"/><rect x="198.55" y="243.08" width="1.6" height="1.6"/><rect x="290.39" y="243.08" width="1.6" height="1.6"/><rect x="129.67" y="255.54" width="1.6" height="1.6"/><rect x="187.07" y="255.54" width="1.6" height="1.6"/><rect x="273.17" y="255.54" width="1.6" height="1.6"/><rect x="129.67" y="268.00" width="1.6" height="1.6"/><rect x="187.07" y="268.00" width="1.6" height="1.6"/><rect x="250.21" y="268.00" width="1.6" height="1.6"/><rect x="129.67" y="280.46" width="1.6" height="1.6"/><rect x="187.07" y="280.46" width="1.6" height="1.6"/><rect x="250.21" y="280.46" width="1.6" height="1.6"/><rect x="129.67" y="292.92" width="1.6" height="1.6"/><rect x="187.07" y="292.92" width="1.6" height="1.6"/><rect x="250.21" y="292.92" width="1.6" height="1.6"/><rect x="129.67" y="305.38" width="1.6" height="1.6"/><rect x="187.07" y="305.38" width="1.6" height="1.6"/><rect x="250.21" y="305.38" width="1.6" height="1.6"/><rect x="129.67" y="317.84" width="1.6" height="1.6"/><rect x="187.07" y="317.84" width="1.6" height="1.6"/><rect x="250.21" y="317.84" width="1.6" height="1.6"/><rect x="129.67" y="330.30" width="1.6" height="1.6"/><rect x="192.81" y="330.30" width="1.6" height="1.6"/><rect x="255.95" y="330.30" width="1.6" height="1.6"/><rect x="129.67" y="342.76" width="1.6" height="1.6"/><rect x="192.81" y="342.76" width="1.6" height="1.6"/><rect x="255.95" y="342.76" width="1.6" height="1.6"/><rect x="129.67" y="355.22" width="1.6" height="1.6"/><rect x="210.03" y="355.22" width="1.6" height="1.6"/><rect x="273.17" y="355.22" width="1.6" height="1.6"/><rect x="129.67" y="367.68" width="1.6" height="1.6"/><rect x="210.03" y="367.68" width="1.6" height="1.6"/><rect x="267.43" y="367.68" width="1.6" height="1.6"/><rect x="129.67" y="380.14" width="1.6" height="1.6"/><rect x="210.03" y="380.14" width="1.6" height="1.6"/><rect x="267.43" y="380.14" width="1.6" height="1.6"/><rect x="129.67" y="392.60" width="1.6" height="1.6"/><rect x="210.03" y="392.60" width="1.6" height="1.6"/><rect x="267.43" y="392.60" width="1.6" height="1.6"/><rect x="112.45" y="417.52" width="1.6" height="1.6"/><rect x="129.67" y="429.98" width="1.6" height="1.6"/><rect x="198.55" y="429.98" width="1.6" height="1.6"/><rect x="267.43" y="429.98" width="1.6" height="1.6"/><rect x="129.67" y="442.44" width="1.6" height="1.6"/><rect x="198.55" y="442.44" width="1.6" height="1.6"/><rect x="261.69" y="442.44" width="1.6" height="1.6"/><rect x="129.67" y="454.90" width="1.6" height="1.6"/><rect x="198.55" y="454.90" width="1.6" height="1.6"/><rect x="261.69" y="454.90" width="1.6" height="1.6"/><rect x="129.67" y="467.36" width="1.6" height="1.6"/><rect x="210.03" y="467.36" width="1.6" height="1.6"/><rect x="273.17" y="467.36" width="1.6" height="1.6"/><rect x="129.67" y="479.82" width="1.6" height="1.6"/><rect x="210.03" y="479.82" width="1.6" height="1.6"/><rect x="273.17" y="479.82" width="1.6" height="1.6"/><rect x="129.67" y="492.28" width="1.6" height="1.6"/><rect x="210.03" y="492.28" width="1.6" height="1.6"/><rect x="273.17" y="492.28" width="1.6" height="1.6"/><rect x="129.67" y="504.74" width="1.6" height="1.6"/><rect x="210.03" y="504.74" width="1.6" height="1.6"/><rect x="273.17" y="504.74" width="1.6" height="1.6"/><rect x="129.67" y="517.20" width="1.6" height="1.6"/><rect x="210.03" y="517.20" width="1.6" height="1.6"/><rect x="273.17" y="517.20" width="1.6" height="1.6"/><rect x="129.67" y="529.66" width="1.6" height="1.6"/><rect x="210.03" y="529.66" width="1.6" height="1.6"/><rect x="273.17" y="529.66" width="1.6" height="1.6"/><rect x="129.67" y="542.12" width="1.6" height="1.6"/><rect x="210.03" y="542.12" width="1.6" height="1.6"/><rect x="267.43" y="542.12" width="1.6" height="1.6"/><rect x="112.45" y="567.04" width="1.6" height="1.6"/><rect x="129.67" y="579.50" width="1.6" height="1.6"/><rect x="198.55" y="579.50" width="1.6" height="1.6"/><rect x="267.43" y="579.50" width="1.6" height="1.6"/><rect x="129.67" y="591.96" width="1.6" height="1.6"/><rect x="187.07" y="591.96" width="1.6" height="1.6"/><rect x="250.21" y="591.96" width="1.6" height="1.6"/><rect x="129.67" y="604.42" width="1.6" height="1.6"/><rect x="187.07" y="604.42" width="1.6" height="1.6"/><rect x="250.21" y="604.42" width="1.6" height="1.6"/><rect x="129.67" y="616.88" width="1.6" height="1.6"/><rect x="187.07" y="616.88" width="1.6" height="1.6"/><rect x="250.21" y="616.88" width="1.6" height="1.6"/><rect x="129.67" y="629.34" width="1.6" height="1.6"/><rect x="187.07" y="629.34" width="1.6" height="1.6"/><rect x="250.21" y="629.34" width="1.6" height="1.6"/><rect x="129.67" y="641.80" width="1.6" height="1.6"/><rect x="187.07" y="641.80" width="1.6" height="1.6"/><rect x="250.21" y="641.80" width="1.6" height="1.6"/><rect x="129.67" y="654.26" width="1.6" height="1.6"/><rect x="187.07" y="654.26" width="1.6" height="1.6"/><rect x="250.21" y="654.26" width="1.6" height="1.6"/><rect x="129.67" y="666.72" width="1.6" height="1.6"/><rect x="192.81" y="666.72" width="1.6" height="1.6"/><rect x="255.95" y="666.72" width="1.6" height="1.6"/><rect x="129.67" y="679.18" width="1.6" height="1.6"/><rect x="210.03" y="679.18" width="1.6" height="1.6"/><rect x="267.43" y="679.18" width="1.6" height="1.6"/><rect x="112.45" y="704.10" width="1.6" height="1.6"/><rect x="129.67" y="716.56" width="1.6" height="1.6"/><rect x="204.29" y="716.56" width="1.6" height="1.6"/><rect x="273.17" y="716.56" width="1.6" height="1.6"/></g>
<g fill="none" stroke="#6f6f6a" stroke-width="1"><path d="M43.50 119.50H62.56M58.36 116.30L62.56 119.50L58.36 122.70"/><path d="M43.50 131.50H62.56M58.36 128.30L62.56 131.50L58.36 134.70"/><path d="M66.46 131.50H85.52M81.32 128.30L85.52 131.50L81.32 134.70"/><path d="M43.50 144.50H62.56M58.36 141.30L62.56 144.50L58.36 147.70"/><path d="M66.46 144.50H85.52M81.32 141.30L85.52 144.50L81.32 147.70"/><path d="M43.50 156.50H62.56M58.36 153.30L62.56 156.50L58.36 159.70"/><path d="M66.46 156.50H85.52M81.32 153.30L85.52 156.50L81.32 159.70"/><path d="M43.50 169.50H62.56M58.36 166.30L62.56 169.50L58.36 172.70"/><path d="M66.46 169.50H85.52M81.32 166.30L85.52 169.50L81.32 172.70"/><path d="M43.50 181.50H62.56M58.36 178.30L62.56 181.50L58.36 184.70"/><path d="M66.46 181.50H85.52M81.32 178.30L85.52 181.50L81.32 184.70"/><path d="M43.50 194.50H62.56M58.36 191.30L62.56 194.50L58.36 197.70"/><path d="M66.46 194.50H85.52M81.32 191.30L85.52 194.50L81.32 197.70"/><path d="M43.50 206.50H62.56M58.36 203.30L62.56 206.50L58.36 209.70"/><path d="M66.46 206.50H85.52M81.32 203.30L85.52 206.50L81.32 209.70"/><path d="M43.50 219.50H62.56M58.36 216.30L62.56 219.50L58.36 222.70"/><path d="M43.50 231.50H62.56M58.36 228.30L62.56 231.50L58.36 234.70"/><path d="M43.50 244.50H62.56M58.36 241.30L62.56 244.50L58.36 247.70"/><path d="M66.46 244.50H85.52M81.32 241.30L85.52 244.50L81.32 247.70"/><path d="M43.50 256.50H62.56M58.36 253.30L62.56 256.50L58.36 259.70"/><path d="M66.46 256.50H85.52M81.32 253.30L85.52 256.50L81.32 259.70"/><path d="M43.50 268.50H62.56M58.36 265.30L62.56 268.50L58.36 271.70"/><path d="M66.46 268.50H85.52M81.32 265.30L85.52 268.50L81.32 271.70"/><path d="M43.50 281.50H62.56M58.36 278.30L62.56 281.50L58.36 284.70"/><path d="M66.46 281.50H85.52M81.32 278.30L85.52 281.50L81.32 284.70"/><path d="M43.50 293.50H62.56M58.36 290.30L62.56 293.50L58.36 296.70"/><path d="M66.46 293.50H85.52M81.32 290.30L85.52 293.50L81.32 296.70"/><path d="M43.50 306.50H62.56M58.36 303.30L62.56 306.50L58.36 309.70"/><path d="M66.46 306.50H85.52M81.32 303.30L85.52 306.50L81.32 309.70"/><path d="M43.50 318.50H62.56M58.36 315.30L62.56 318.50L58.36 321.70"/><path d="M66.46 318.50H85.52M81.32 315.30L85.52 318.50L81.32 321.70"/><path d="M43.50 331.50H62.56M58.36 328.30L62.56 331.50L58.36 334.70"/><path d="M66.46 331.50H85.52M81.32 328.30L85.52 331.50L81.32 334.70"/><path d="M43.50 343.50H62.56M58.36 340.30L62.56 343.50L58.36 346.70"/><path d="M66.46 343.50H85.52M81.32 340.30L85.52 343.50L81.32 346.70"/><path d="M43.50 356.50H62.56M58.36 353.30L62.56 356.50L58.36 359.70"/><path d="M66.46 356.50H85.52M81.32 353.30L85.52 356.50L81.32 359.70"/><path d="M43.50 368.50H62.56M58.36 365.30L62.56 368.50L58.36 371.70"/><path d="M66.46 368.50H85.52M81.32 365.30L85.52 368.50L81.32 371.70"/><path d="M43.50 381.50H62.56M58.36 378.30L62.56 381.50L58.36 384.70"/><path d="M66.46 381.50H85.52M81.32 378.30L85.52 381.50L81.32 384.70"/><path d="M43.50 393.50H62.56M58.36 390.30L62.56 393.50L58.36 396.70"/><path d="M66.46 393.50H85.52M81.32 390.30L85.52 393.50L81.32 396.70"/><path d="M43.50 406.50H62.56M58.36 403.30L62.56 406.50L58.36 409.70"/><path d="M43.50 418.50H62.56M58.36 415.30L62.56 418.50L58.36 421.70"/><path d="M43.50 430.50H62.56M58.36 427.30L62.56 430.50L58.36 433.70"/><path d="M66.46 430.50H85.52M81.32 427.30L85.52 430.50L81.32 433.70"/><path d="M43.50 443.50H62.56M58.36 440.30L62.56 443.50L58.36 446.70"/><path d="M66.46 443.50H85.52M81.32 440.30L85.52 443.50L81.32 446.70"/><path d="M43.50 455.50H62.56M58.36 452.30L62.56 455.50L58.36 458.70"/><path d="M66.46 455.50H85.52M81.32 452.30L85.52 455.50L81.32 458.70"/><path d="M43.50 468.50H62.56M58.36 465.30L62.56 468.50L58.36 471.70"/><path d="M66.46 468.50H85.52M81.32 465.30L85.52 468.50L81.32 471.70"/><path d="M43.50 480.50H62.56M58.36 477.30L62.56 480.50L58.36 483.70"/><path d="M66.46 480.50H85.52M81.32 477.30L85.52 480.50L81.32 483.70"/><path d="M43.50 493.50H62.56M58.36 490.30L62.56 493.50L58.36 496.70"/><path d="M66.46 493.50H85.52M81.32 490.30L85.52 493.50L81.32 496.70"/><path d="M43.50 505.50H62.56M58.36 502.30L62.56 505.50L58.36 508.70"/><path d="M66.46 505.50H85.52M81.32 502.30L85.52 505.50L81.32 508.70"/><path d="M43.50 518.50H62.56M58.36 515.30L62.56 518.50L58.36 521.70"/><path d="M66.46 518.50H85.52M81.32 515.30L85.52 518.50L81.32 521.70"/><path d="M43.50 530.50H62.56M58.36 527.30L62.56 530.50L58.36 533.70"/><path d="M66.46 530.50H85.52M81.32 527.30L85.52 530.50L81.32 533.70"/><path d="M43.50 543.50H62.56M58.36 540.30L62.56 543.50L58.36 546.70"/><path d="M66.46 543.50H85.52M81.32 540.30L85.52 543.50L81.32 546.70"/><path d="M43.50 555.50H62.56M58.36 552.30L62.56 555.50L58.36 558.70"/><path d="M43.50 568.50H62.56M58.36 565.30L62.56 568.50L58.36 571.70"/><path d="M43.50 580.50H62.56M58.36 577.30L62.56 580.50L58.36 583.70"/><path d="M66.46 580.50H85.52M81.32 577.30L85.52 580.50L81.32 583.70"/><path d="M43.50 592.50H62.56M58.36 589.30L62.56 592.50L58.36 595.70"/><path d="M66.46 592.50H85.52M81.32 589.30L85.52 592.50L81.32 595.70"/><path d="M43.50 605.50H62.56M58.36 602.30L62.56 605.50L58.36 608.70"/><path d="M66.46 605.50H85.52M81.32 602.30L85.52 605.50L81.32 608.70"/><path d="M43.50 617.50H62.56M58.36 614.30L62.56 617.50L58.36 620.70"/><path d="M66.46 617.50H85.52M81.32 614.30L85.52 617.50L81.32 620.70"/><path d="M43.50 630.50H62.56M58.36 627.30L62.56 630.50L58.36 633.70"/><path d="M66.46 630.50H85.52M81.32 627.30L85.52 630.50L81.32 633.70"/><path d="M43.50 642.50H62.56M58.36 639.30L62.56 642.50L58.36 645.70"/><path d="M66.46 642.50H85.52M81.32 639.30L85.52 642.50L81.32 645.70"/><path d="M43.50 655.50H62.56M58.36 652.30L62.56 655.50L58.36 658.70"/><path d="M66.46 655.50H85.52M81.32 652.30L85.52 655.50L81.32 658.70"/><path d="M43.50 667.50H62.56M58.36 664.30L62.56 667.50L58.36 670.70"/><path d="M66.46 667.50H85.52M81.32 664.30L85.52 667.50L81.32 670.70"/><path d="M43.50 680.50H62.56M58.36 677.30L62.56 680.50L58.36 683.70"/><path d="M66.46 680.50H85.52M81.32 677.30L85.52 680.50L81.32 683.70"/><path d="M43.50 692.50H62.56M58.36 689.30L62.56 692.50L58.36 695.70"/><path d="M43.50 705.50H62.56M58.36 702.30L62.56 705.50L58.36 708.70"/><path d="M43.50 717.50H62.56M58.36 714.30L62.56 717.50L58.36 720.70"/><path d="M66.46 717.50H85.52M81.32 714.30L85.52 717.50L81.32 720.70"/><path d="M43.50 730.50H62.56M58.36 727.30L62.56 730.50L58.36 733.70"/></g>
<g fill="#1b1b1b" stroke="#eeeeee" stroke-width="1.15" stroke-linejoin="round"><path d="M31.7 104.02H40.5L36.1 108.82Z"/><path d="M31.7 116.48H40.5L36.1 121.28Z"/><path d="M31.7 228.62H40.5L36.1 233.42Z"/><path d="M31.7 415.52H40.5L36.1 420.32Z"/><path d="M31.7 565.04H40.5L36.1 569.84Z"/><path d="M31.7 702.10H40.5L36.1 706.90Z"/></g>
</svg>
<div class="ln" style="top:0.90px"><span class="w">&lt;?</span><span class="p">xml</span> <span class="g">version</span><span class="w">=</span><span class="y">&quot;1.0&quot;</span> <span class="g">encoding</span><span class="w">=</span><span class="y">&quot;utf-8&quot;</span><span class="w">?&gt;</span></div>
<div class="ln" style="top:13.36px"><span class="y">&lt;!</span><span class="w">DOCTYPE</span> <span class="w">list</span> <span class="w">SYSTEM</span> <span class="w">&quot;enchant_data.dtd&quot;</span><span class="y">&gt;</span></div>
<div class="ln" style="top:25.82px"><span class="p">&lt;list</span><span class="p">&gt;</span></div>
<div class="ln" style="top:38.28px"><span class="t"></span><span class="p">&lt;config</span><span class="p">&gt;</span></div>
<div class="ln" style="top:50.74px"><span class="t"></span><span class="t"></span><span class="p">&lt;param</span> <span class="g">name</span><span class="w">=</span><span class="y">&quot;max_enchant&quot;</span> <span class="g">value</span><span class="w">=</span><span class="y">&quot;30&quot;</span> <span class="p">/&gt;</span></div>
<div class="ln" style="top:63.20px"><span class="t"></span><span class="t"></span><span class="p">&lt;param</span> <span class="g">name</span><span class="w">=</span><span class="y">&quot;broadcast&quot;</span> <span class="g">value</span><span class="w">=</span><span class="y">&quot;255;255;255;255&quot;</span> <span class="p">/&gt;</span></div>
<div class="ln" style="top:75.66px"><span class="t"></span><span class="t"></span><span class="p">&lt;param</span> <span class="g">name</span><span class="w">=</span><span class="y">&quot;announce&quot;</span> <span class="g">value</span><span class="w">=</span><span class="y">&quot;25;25;12;10&quot;</span> <span class="p">/&gt;</span></div>
<div class="ln" style="top:88.12px"><span class="t"></span><span class="t"></span><span class="p">&lt;param</span> <span class="g">name</span><span class="w">=</span><span class="y">&quot;chance_armor&quot;</span> <span class="g">value</span><span class="w">=</span><span class="y">&quot;armor_def&quot;</span> <span class="p">/&gt;</span></div>
<div class="ln" style="top:100.58px"><span class="t"></span><span class="t"></span><span class="p">&lt;param</span> <span class="g">name</span><span class="w">=</span><span class="y">&quot;chance_weapon&quot;</span> <span class="g">value</span><span class="w">=</span><span class="y">&quot;weapon_def&quot;</span> <span class="p">/&gt;</span></div>
<div class="ln" style="top:113.04px"><span class="t"></span><span class="t"></span><span class="p">&lt;param</span> <span class="g">name</span><span class="w">=</span><span class="y">&quot;chance_hair&quot;</span> <span class="g">value</span><span class="w">=</span><span class="y">&quot;hair_accessory_def&quot;</span> <span class="p">/&gt;</span></div>
<div class="ln" style="top:125.50px"><span class="t"></span><span class="t"></span><span class="p">&lt;param</span> <span class="g">name</span><span class="w">=</span><span class="y">&quot;premium_bonus&quot;</span> <span class="g">value</span><span class="w">=</span><span class="y">&quot;0.0&quot;</span> <span class="p">/&gt;</span></div>
<div class="ln" style="top:137.96px"><span class="t"></span><span class="p">&lt;/config</span><span class="p">&gt;</span></div>
<div class="ln" style="top:150.42px"><span class="t"></span><span class="p">&lt;chances</span> <span class="g">name</span><span class="w">=</span><span class="y">&quot;armor_def&quot;</span><span class="p">&gt;</span></div>
<div class="ln" style="top:162.88px"><span class="t"></span><span class="t"></span><span class="p">&lt;chance</span> <span class="g">level</span><span class="w">=</span><span class="y">&quot;1:3&quot;</span> <span class="g">value</span><span class="w">=</span><span class="y">&quot;100;100&quot;</span> <span class="p">/&gt;</span></div>
<div class="ln" style="top:175.34px"><span class="t"></span><span class="t"></span><span class="p">&lt;chance</span> <span class="g">level</span><span class="w">=</span><span class="y">&quot;4&quot;</span> <span class="g">value</span><span class="w">=</span><span class="y">&quot;66;100&quot;</span> <span class="p">/&gt;</span></div>
<div class="ln" style="top:187.80px"><span class="t"></span><span class="t"></span><span class="p">&lt;chance</span> <span class="g">level</span><span class="w">=</span><span class="y">&quot;5&quot;</span> <span class="g">value</span><span class="w">=</span><span class="y">&quot;33&quot;</span> <span class="p">/&gt;</span></div>
<div class="ln" style="top:200.26px"><span class="t"></span><span class="t"></span><span class="p">&lt;chance</span> <span class="g">level</span><span class="w">=</span><span class="y">&quot;6&quot;</span> <span class="g">value</span><span class="w">=</span><span class="y">&quot;25&quot;</span> <span class="p">/&gt;</span></div>
<div class="ln" style="top:212.72px"><span class="t"></span><span class="t"></span><span class="p">&lt;chance</span> <span class="g">level</span><span class="w">=</span><span class="y">&quot;7&quot;</span> <span class="g">value</span><span class="w">=</span><span class="y">&quot;20&quot;</span> <span class="p">/&gt;</span></div>
<div class="ln" style="top:225.18px"><span class="t"></span><span class="t"></span><span class="p">&lt;chance</span> <span class="g">level</span><span class="w">=</span><span class="y">&quot;8&quot;</span> <span class="g">value</span><span class="w">=</span><span class="y">&quot;16&quot;</span> <span class="p">/&gt;</span></div>
<div class="ln" style="top:237.64px"><span class="t"></span><span class="t"></span><span class="p">&lt;chance</span> <span class="g">level</span><span class="w">=</span><span class="y">&quot;9&quot;</span> <span class="g">value</span><span class="w">=</span><span class="y">&quot;14&quot;</span> <span class="p">/&gt;</span></div>
<div class="ln" style="top:250.10px"><span class="t"></span><span class="t"></span><span class="p">&lt;chance</span> <span class="g">level</span><span class="w">=</span><span class="y">&quot;10&quot;</span> <span class="g">value</span><span class="w">=</span><span class="y">&quot;12&quot;</span> <span class="p">/&gt;</span></div>
<div class="ln" style="top:262.56px"><span class="t"></span><span class="t"></span><span class="p">&lt;chance</span> <span class="g">level</span><span class="w">=</span><span class="y">&quot;11&quot;</span> <span class="g">value</span><span class="w">=</span><span class="y">&quot;11&quot;</span> <span class="p">/&gt;</span></div>
<div class="ln" style="top:275.02px"><span class="t"></span><span class="t"></span><span class="p">&lt;chance</span> <span class="g">level</span><span class="w">=</span><span class="y">&quot;12:20&quot;</span> <span class="g">value</span><span class="w">=</span><span class="y">&quot;10&quot;</span> <span class="p">/&gt;</span></div>
<div class="ln" style="top:287.48px"><span class="t"></span><span class="t"></span><span class="p">&lt;chance</span> <span class="g">level</span><span class="w">=</span><span class="y">&quot;21:25&quot;</span> <span class="g">value</span><span class="w">=</span><span class="y">&quot;7&quot;</span> <span class="p">/&gt;</span></div>
<div class="ln" style="top:299.94px"><span class="t"></span><span class="t"></span><span class="p">&lt;chance</span> <span class="g">level</span><span class="w">=</span><span class="y">&quot;26:30&quot;</span> <span class="g">value</span><span class="w">=</span><span class="y">&quot;4&quot;</span> <span class="p">/&gt;</span></div>
<div class="ln" style="top:312.40px"><span class="t"></span><span class="t"></span><span class="p">&lt;chance</span> <span class="g">level</span><span class="w">=</span><span class="y">&quot;31:50&quot;</span> <span class="g">value</span><span class="w">=</span><span class="y">&quot;0&quot;</span> <span class="p">/&gt;</span></div>
<div class="ln" style="top:324.86px"><span class="t"></span><span class="p">&lt;/chances</span><span class="p">&gt;</span></div>
<div class="ln" style="top:337.32px"><span class="t"></span><span class="p">&lt;chances</span> <span class="g">name</span><span class="w">=</span><span class="y">&quot;weapon_def&quot;</span><span class="p">&gt;</span></div>
<div class="ln" style="top:349.78px"><span class="t"></span><span class="t"></span><span class="p">&lt;chance</span> <span class="g">level</span><span class="w">=</span><span class="y">&quot;1:3&quot;</span> <span class="g">value</span><span class="w">=</span><span class="y">&quot;100&quot;</span> <span class="p">/&gt;</span></div>
<div class="ln" style="top:362.24px"><span class="t"></span><span class="t"></span><span class="p">&lt;chance</span> <span class="g">level</span><span class="w">=</span><span class="y">&quot;4:6&quot;</span> <span class="g">value</span><span class="w">=</span><span class="y">&quot;50&quot;</span> <span class="p">/&gt;</span></div>
<div class="ln" style="top:374.70px"><span class="t"></span><span class="t"></span><span class="p">&lt;chance</span> <span class="g">level</span><span class="w">=</span><span class="y">&quot;7:9&quot;</span> <span class="g">value</span><span class="w">=</span><span class="y">&quot;33&quot;</span> <span class="p">/&gt;</span></div>
<div class="ln" style="top:387.16px"><span class="t"></span><span class="t"></span><span class="p">&lt;chance</span> <span class="g">level</span><span class="w">=</span><span class="y">&quot;10:12&quot;</span> <span class="g">value</span><span class="w">=</span><span class="y">&quot;25&quot;</span> <span class="p">/&gt;</span></div>
<div class="ln" style="top:399.62px"><span class="t"></span><span class="t"></span><span class="p">&lt;chance</span> <span class="g">level</span><span class="w">=</span><span class="y">&quot;13:15&quot;</span> <span class="g">value</span><span class="w">=</span><span class="y">&quot;20&quot;</span> <span class="p">/&gt;</span></div>
<div class="ln" style="top:412.08px"><span class="t"></span><span class="t"></span><span class="p">&lt;chance</span> <span class="g">level</span><span class="w">=</span><span class="y">&quot;16:20&quot;</span> <span class="g">value</span><span class="w">=</span><span class="y">&quot;16&quot;</span> <span class="p">/&gt;</span></div>
<div class="ln" style="top:424.54px"><span class="t"></span><span class="t"></span><span class="p">&lt;chance</span> <span class="g">level</span><span class="w">=</span><span class="y">&quot;21:23&quot;</span> <span class="g">value</span><span class="w">=</span><span class="y">&quot;14&quot;</span> <span class="p">/&gt;</span></div>
<div class="ln" style="top:437.00px"><span class="t"></span><span class="t"></span><span class="p">&lt;chance</span> <span class="g">level</span><span class="w">=</span><span class="y">&quot;24:26&quot;</span> <span class="g">value</span><span class="w">=</span><span class="y">&quot;12&quot;</span> <span class="p">/&gt;</span></div>
<div class="ln" style="top:449.46px"><span class="t"></span><span class="t"></span><span class="p">&lt;chance</span> <span class="g">level</span><span class="w">=</span><span class="y">&quot;27:30&quot;</span> <span class="g">value</span><span class="w">=</span><span class="y">&quot;10&quot;</span> <span class="p">/&gt;</span></div>
<div class="ln" style="top:461.92px"><span class="t"></span><span class="t"></span><span class="p">&lt;chance</span> <span class="g">level</span><span class="w">=</span><span class="y">&quot;31:50&quot;</span> <span class="g">value</span><span class="w">=</span><span class="y">&quot;0&quot;</span> <span class="p">/&gt;</span></div>
<div class="ln" style="top:474.38px"><span class="t"></span><span class="p">&lt;/chances</span><span class="p">&gt;</span></div>
<div class="ln" style="top:486.84px"><span class="t"></span><span class="p">&lt;chances</span> <span class="g">name</span><span class="w">=</span><span class="y">&quot;hair_accessory_def&quot;</span><span class="p">&gt;</span></div>
<div class="ln" style="top:499.30px"><span class="t"></span><span class="t"></span><span class="p">&lt;chance</span> <span class="g">level</span><span class="w">=</span><span class="y">&quot;1:3&quot;</span> <span class="g">value</span><span class="w">=</span><span class="y">&quot;100&quot;</span> <span class="p">/&gt;</span></div>
<div class="ln" style="top:511.76px"><span class="t"></span><span class="t"></span><span class="p">&lt;chance</span> <span class="g">level</span><span class="w">=</span><span class="y">&quot;4&quot;</span> <span class="g">value</span><span class="w">=</span><span class="y">&quot;66&quot;</span> <span class="p">/&gt;</span></div>
<div class="ln" style="top:524.22px"><span class="t"></span><span class="t"></span><span class="p">&lt;chance</span> <span class="g">level</span><span class="w">=</span><span class="y">&quot;5&quot;</span> <span class="g">value</span><span class="w">=</span><span class="y">&quot;33&quot;</span> <span class="p">/&gt;</span></div>
<div class="ln" style="top:536.68px"><span class="t"></span><span class="t"></span><span class="p">&lt;chance</span> <span class="g">level</span><span class="w">=</span><span class="y">&quot;6&quot;</span> <span class="g">value</span><span class="w">=</span><span class="y">&quot;25&quot;</span> <span class="p">/&gt;</span></div>
<div class="ln" style="top:549.14px"><span class="t"></span><span class="t"></span><span class="p">&lt;chance</span> <span class="g">level</span><span class="w">=</span><span class="y">&quot;7&quot;</span> <span class="g">value</span><span class="w">=</span><span class="y">&quot;20&quot;</span> <span class="p">/&gt;</span></div>
<div class="ln" style="top:561.60px"><span class="t"></span><span class="t"></span><span class="p">&lt;chance</span> <span class="g">level</span><span class="w">=</span><span class="y">&quot;8&quot;</span> <span class="g">value</span><span class="w">=</span><span class="y">&quot;16&quot;</span> <span class="p">/&gt;</span></div>
<div class="ln" style="top:574.06px"><span class="t"></span><span class="t"></span><span class="p">&lt;chance</span> <span class="g">level</span><span class="w">=</span><span class="y">&quot;9&quot;</span> <span class="g">value</span><span class="w">=</span><span class="y">&quot;14&quot;</span> <span class="p">/&gt;</span></div>
<div class="ln" style="top:586.52px"><span class="t"></span><span class="t"></span><span class="p">&lt;chance</span> <span class="g">level</span><span class="w">=</span><span class="y">&quot;10&quot;</span> <span class="g">value</span><span class="w">=</span><span class="y">&quot;12&quot;</span> <span class="p">/&gt;</span></div>
<div class="ln" style="top:598.98px"><span class="t"></span><span class="t"></span><span class="p">&lt;chance</span> <span class="g">level</span><span class="w">=</span><span class="y">&quot;11:50&quot;</span> <span class="g">value</span><span class="w">=</span><span class="y">&quot;0&quot;</span> <span class="p">/&gt;</span></div>
<div class="ln" style="top:611.44px"><span class="t"></span><span class="p">&lt;/chances</span><span class="p">&gt;</span></div>
<div class="ln" style="top:623.90px"><span class="t"></span><span class="p">&lt;chances</span> <span class="g">name</span><span class="w">=</span><span class="y">&quot;all_100&quot;</span><span class="p">&gt;</span></div>
<div class="ln" style="top:636.36px"><span class="t"></span><span class="t"></span><span class="p">&lt;chance</span> <span class="g">level</span><span class="w">=</span><span class="y">&quot;1:50&quot;</span> <span class="g">value</span><span class="w">=</span><span class="y">&quot;100&quot;</span> <span class="p">/&gt;</span></div>
<div class="ln" style="top:648.82px"><span class="t"></span><span class="p">&lt;/chances</span><span class="p">&gt;</span></div>
</div>
<div class="a" style="left:1px;top:75px;width:747px;height:1px;background:#1e2022"></div>
<div id="vscroll" class="a"></div>
<div id="hscroll" class="a"></div>
<svg class="a" style="left:0;top:0" width="760" height="768"><rect x="73" y="737" width="1" height="1" fill="#c8285a"/><rect x="147.5" y="737" width="1" height="1" fill="#a89e58"/><rect x="170.5" y="737" width="1" height="1" fill="#a89e58"/><rect x="192" y="737" width="1" height="1" fill="#6a6650"/><rect x="749.6" y="86" width="8" height="21.5" fill="#cdcdcd"/><rect x="747" y="75" width="1" height="663" fill="#1d1e1a"/><path d="M751 81.6L753.5 79L756 81.6" fill="none" stroke="#555" stroke-width="1.2"/><path d="M751 731.4L753.5 734L756 731.4" fill="none" stroke="#555" stroke-width="1.2"/><rect x="12" y="739.6" width="718" height="8.3" fill="#cdcdcd"/><path d="M7.2 741.2L4.4 743.6L7.2 746" fill="none" stroke="#444" stroke-width="1.3"/><path d="M741.4 741.2L744.2 743.6L741.4 746" fill="none" stroke="#444" stroke-width="1.3"/></svg>
<div id="status" class="a"></div>
<svg class="a" style="left:0;top:0" width="760" height="768"><rect x="165.5" y="750" width="1" height="15" fill="#d9d9d9"/><rect x="337.3" y="750" width="1" height="15" fill="#d9d9d9"/><rect x="540" y="750" width="1" height="15" fill="#d9d9d9"/><rect x="626" y="750" width="1" height="15" fill="#d9d9d9"/><rect x="719.5" y="750" width="1" height="15" fill="#d9d9d9"/><rect x="743" y="750" width="1" height="15" fill="#d9d9d9"/><g fill="#b4b4b4"><rect x="756" y="759" width="1" height="1"/><rect x="754" y="761" width="1" height="1"/><rect x="756" y="761" width="1" height="1"/><rect x="752" y="763" width="1" height="1"/><rect x="754" y="763" width="1" height="1"/><rect x="756" y="763" width="1" height="1"/></g></svg><div class="lbl" style="left:1.90px;top:753.16px;transform:scaleX(0.8781);color:#000;font-size:10.5px">eXtensible Markup Language file</div>
<div class="lbl" style="left:169.10px;top:753.16px;transform:scaleX(0.8573);color:#000;font-size:10.5px">length: 201 295</div>
<div class="lbl" style="left:240.40px;top:753.16px;transform:scaleX(0.8330);color:#000;font-size:10.5px">lines: 1 590</div>
<div class="lbl" style="left:340.80px;top:753.16px;transform:scaleX(0.8282);color:#000;font-size:10.5px">Ln: 1</div>
<div class="lbl" style="left:370.00px;top:753.16px;transform:scaleX(0.8328);color:#000;font-size:10.5px">Col: 1</div>
<div class="lbl" style="left:402.40px;top:753.16px;transform:scaleX(0.7964);color:#000;font-size:10.5px">Pos: 1</div>
<div class="lbl" style="left:543.70px;top:753.16px;transform:scaleX(0.8493);color:#000;font-size:10.5px">Unix (LF)</div>
<div class="lbl" style="left:628.90px;top:753.16px;transform:scaleX(0.8797);color:#000;font-size:10.5px">UTF-8-BOM</div>
<div class="lbl" style="left:722.40px;top:753.16px;transform:scaleX(0.8305);color:#000;font-size:10.5px">INS</div>
<div class="a" style="left:0;top:0;width:760px;height:1px;background:#565655"></div><div id="bl" class="a"></div><div id="br" class="a"></div><div id="bb" class="a"></div>
</body></html>
